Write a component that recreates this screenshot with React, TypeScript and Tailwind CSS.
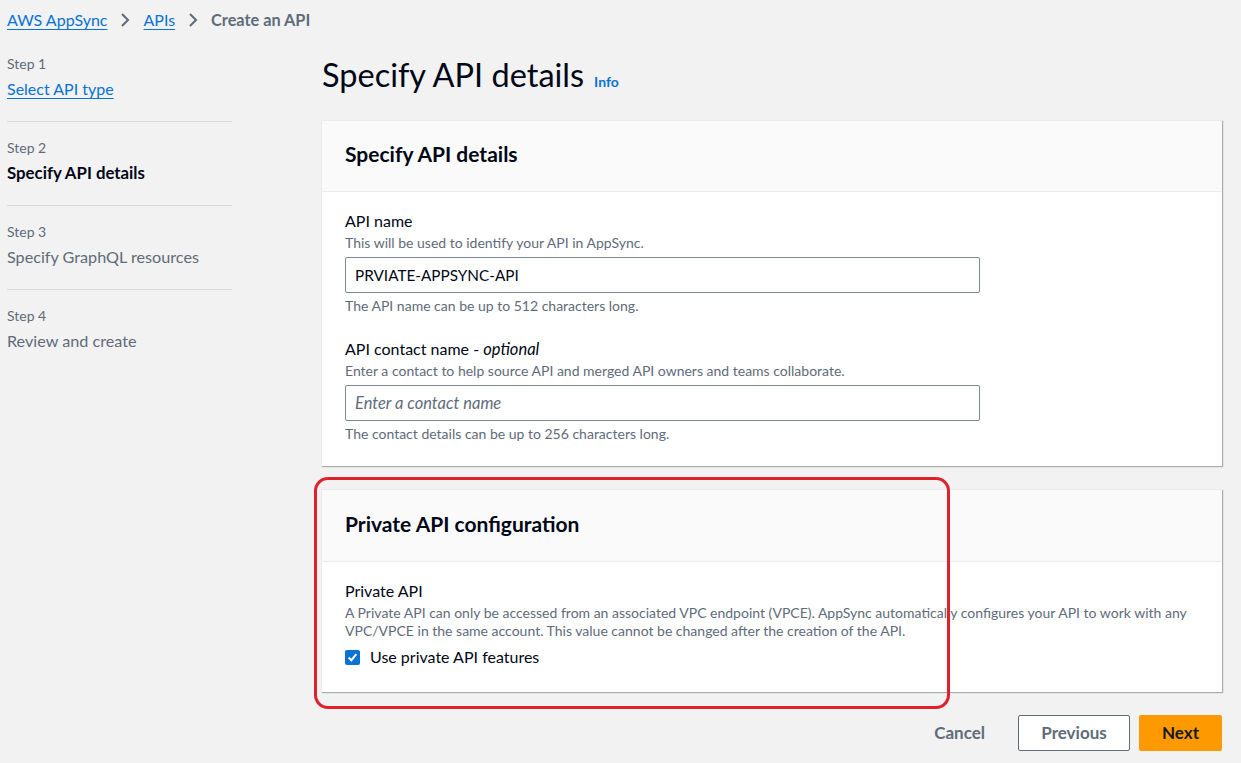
import React from "react";

const Chevron = () => (
  <svg width="12" height="16" viewBox="0 0 12 16" className="mx-[12px]">
    <polyline points="3,2 9,8 3,14" fill="none" stroke="#5f6b7a" strokeWidth="2" />
  </svg>
);

const NavItem = ({ step, title, kind, first }: { step: string; title: string; kind: "link" | "active" | "plain"; first?: boolean }) => (
  <div className={first ? "pb-[21px]" : "border-t border-[#d5dbdb] pt-[17px] pb-[21px]"}>
    <div className="text-[14px] leading-[18px] text-[#5f6b7a]">{step}</div>
    <div
      className={
        "mt-[5px] leading-[22px] " +
        (kind === "link"
          ? "text-[16px] text-[#0972d3] underline underline-offset-[3px]"
          : kind === "active"
          ? "text-[16.8px] font-bold text-[#000716]"
          : "text-[16.2px] text-[#5f6b7a]")
      }
    >
      {title}
    </div>
  </div>
);

export default function App() {
  return (
    <div
      className="relative min-h-[763px] w-[1241px] bg-[#f2f2f2] text-[#000716]"
      style={{ fontFamily: "Lato, 'Open Sans', sans-serif" }}
    >
      {/* Breadcrumb */}
      <div className="flex h-[31px] items-center pl-[7px] pt-[9px] text-[16px] leading-[22px]">
        <span className="text-[#0972d3] underline underline-offset-[3px]">AWS AppSync</span>
        <Chevron />
        <span className="text-[#0972d3] underline underline-offset-[3px]">APIs</span>
        <Chevron />
        <span className="text-[16.3px] font-bold text-[#5f6b7a]">Create an API</span>
      </div>

      <div className="flex">
        {/* Side nav */}
        <nav className="ml-[7px] mt-[24px] w-[225px]">
          <NavItem first step="Step 1" title="Select API type" kind="link" />
          <NavItem step="Step 2" title="Specify API details" kind="active" />
          <NavItem step="Step 3" title="Specify GraphQL resources" kind="plain" />
          <div className="border-t border-[#d5dbdb] pt-[17px]">
            <div className="text-[14px] leading-[18px] text-[#5f6b7a]">Step 4</div>
            <div className="mt-[5px] text-[16.2px] leading-[22px] text-[#5f6b7a]">Review and create</div>
          </div>
        </nav>

        {/* Main */}
        <main className="ml-[89px] w-[901px]">
          <div className="mt-[24px] mb-[25px] flex items-baseline pl-[1px]">
            <h1 className="text-[32.5px] leading-[40px] font-normal text-[#000716]">Specify API details</h1>
            <span className="ml-[10px] text-[14px] font-bold text-[#0972d3]">Info</span>
          </div>

          {/* Card 1 */}
          <section className="border-t border-l border-[#e9ebed] bg-white shadow-[1px_1px_1px_0_rgba(0,7,22,0.3)]">
            <div className="border-b border-[#e9ebed] bg-[#fafafa] px-[23px] pt-[21px] pb-[25px]">
              <h2 className="text-[21px] leading-[24px] font-bold">Specify API details</h2>
            </div>
            <div className="px-[23px] pt-[19px] pb-[23px]">
              <div className="text-[16px] leading-[20px]">API name</div>
              <div className="mt-[3px] text-[14px] leading-[18px] text-[#5f6b7a]">This will be used to identify your API in AppSync.</div>
              <div className="mt-[5px] flex h-[36px] w-[635px] items-center rounded-[2px] border border-[#7d8998] bg-white px-[9px] text-[15.3px]">
                PRVIATE-APPSYNC-API
              </div>
              <div className="mt-[4px] text-[14px] leading-[18px] text-[#5f6b7a]">The API name can be up to 512 characters long.</div>

              <div className="mt-[24px] text-[16px] leading-[20px]">
                API contact name - <i className="text-[16.5px]">optional</i>
              </div>
              <div className="mt-[3px] text-[14px] leading-[18px] text-[#5f6b7a]">
                Enter a contact to help source API and merged API owners and teams collaborate.
              </div>
              <div className="mt-[5px] flex h-[36px] w-[635px] items-center rounded-[2px] border border-[#7d8998] bg-white px-[9px] text-[16.5px] italic text-[#5f6b7a]">
                Enter a contact name
              </div>
              <div className="mt-[4px] text-[14px] leading-[18px] text-[#5f6b7a]">The contact details can be up to 256 characters long.</div>
            </div>
          </section>

          {/* Card 2 */}
          <section className="mt-[23px] border-t border-l border-[#e9ebed] bg-white shadow-[1px_1px_1px_0_rgba(0,7,22,0.3)]">
            <div className="border-b border-[#e9ebed] bg-[#fafafa] px-[23px] pt-[22px] pb-[25px]">
              <h2 className="text-[21px] leading-[24px] font-bold">Private API configuration</h2>
            </div>
            <div className="px-[23px] pt-[19px] pb-[24px]">
              <div className="text-[16px] leading-[20px]">Private API</div>
              <div className="mt-[3px] text-[14px] leading-[18px] text-[#5f6b7a]">
                A Private API can only be accessed from an associated VPC endpoint (VPCE). AppSync automatically configures your API to work with any
                <br />
                VPC/VPCE in the same account. This value cannot be changed after the creation of the API.
              </div>
              <div className="mt-[6px] flex h-[22px] items-center">
                <span className="flex h-[15px] w-[15px] items-center justify-center rounded-[2px] bg-[#0972d3]">
                  <svg width="11" height="11" viewBox="0 0 10 10">
                    <polyline points="1.5,5 4,7.5 8.5,2" fill="none" stroke="white" strokeWidth="1.8" />
                  </svg>
                </span>
                <span className="ml-[10px] text-[16px]">Use private API features</span>
              </div>
            </div>
          </section>

          {/* Actions */}
          <div className="mt-[23px] flex items-center justify-end">
            <span className="mr-[33px] text-[17px] font-bold text-[#5f6b7a]">Cancel</span>
            <button className="h-[36px] w-[112px] rounded-[2px] border border-[#5f6b7a] bg-white text-[17px] font-bold text-[#5f6b7a]">
              Previous
            </button>
            <button className="ml-[9px] h-[36px] w-[83px] rounded-[2px] bg-[#ff9900] text-[17px] font-bold text-[#16191f]">
              Next
            </button>
          </div>
        </main>
      </div>

      {/* Red annotation */}
      <div className="pointer-events-none absolute left-[314px] top-[477px] h-[232px] w-[636px] rounded-[14px] border-[3px] border-[#e0202a]" />
    </div>
  );
}
